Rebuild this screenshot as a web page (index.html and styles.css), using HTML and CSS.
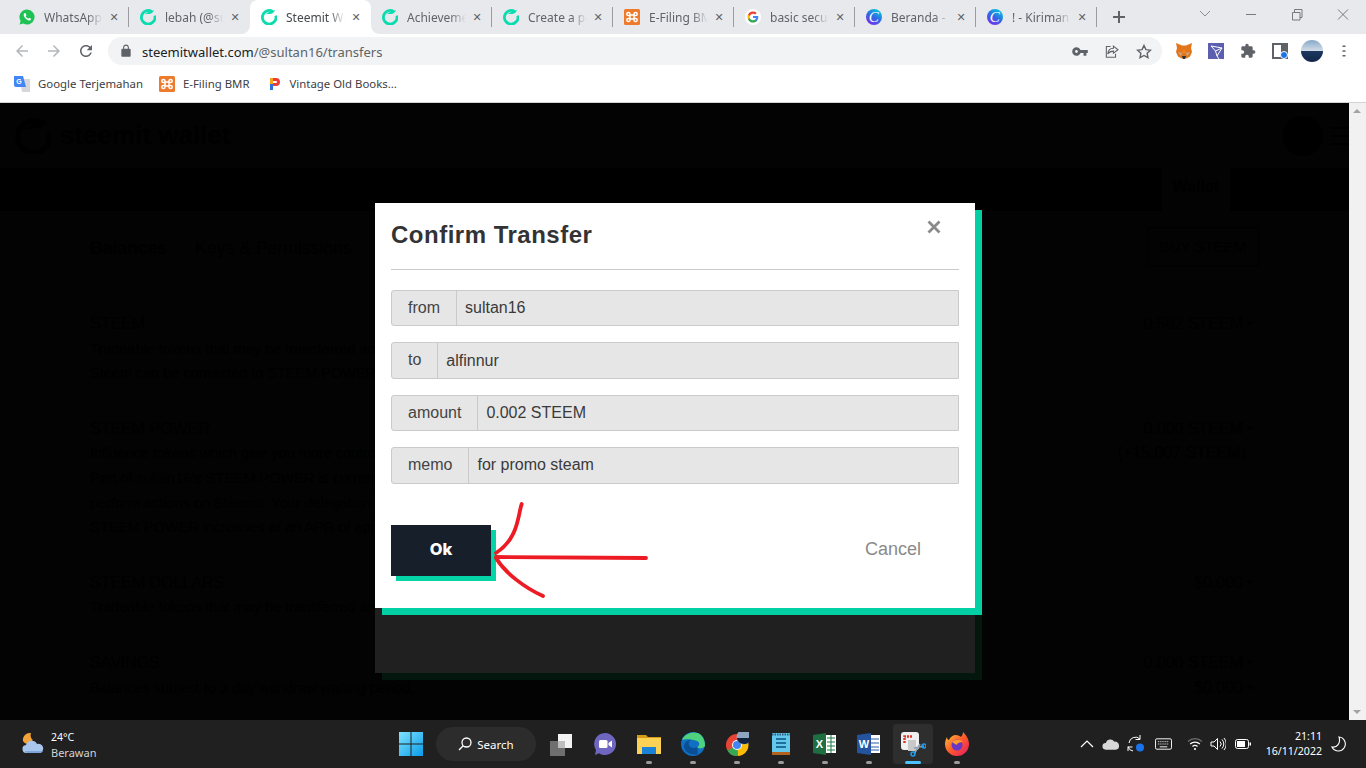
FILE: index.html
```html
<!DOCTYPE html>
<html lang="en">
<head>
    <meta charset="UTF-8">
    <meta name="viewport" content="width=device-width, initial-scale=1.0">
    <title>Steemit Wallet - Confirm Transfer</title>
    <link rel="stylesheet" href="styles.css">
</head>
<body>
    <!-- shared favicons -->
    <svg class="sprites" width="0" height="0">
        <defs>
            <symbol id="ico-steem" viewBox="0 0 16 16">
                <path d="M11.600 2.400A6.800 6.800 0 1 0 14.800 6.600" fill="none" stroke="#0bdcb0" stroke-width="2.800"/>
                <path d="M4.600 5.400C6.400 3 10 2.200 14 0.900 13 3.800 11 5.200 8.400 5 6.900 4.900 5.600 5 4.600 5.400Z" fill="#0bdcb0"/>
            </symbol>
            <symbol id="ico-xampp" viewBox="0 0 16 16">
                <rect width="16" height="16" rx="1.500" fill="#ee7a2c"/>
                <path d="M6 6H10V10H6ZM6 6V5A1.600 1.600 0 1 0 4.400 6.600H6M10 6V5A1.600 1.600 0 1 1 11.600 6.600H10M6 10V11A1.600 1.600 0 1 1 4.400 9.400H6M10 10V11A1.600 1.600 0 1 0 11.600 9.400H10" fill="none" stroke="#fff" stroke-width="1.500"/>
            </symbol>
            <symbol id="ico-google" viewBox="0 0 16 16">
                <circle cx="8" cy="8" r="8" fill="#fff"/>
                <path d="M13.300 8.100c0-.4 0-.8-.1-1.100H8v2.100h3a2.600 2.600 0 0 1-1.100 1.700v1.400h1.800c1-1 1.600-2.400 1.600-4.100Z" fill="#4285f4"/>
                <path d="M8 13.500c1.500 0 2.700-.5 3.700-1.300l-1.800-1.400c-.5.300-1.100.5-1.900.5-1.400 0-2.700-1-3.100-2.300H3v1.400A5.500 5.500 0 0 0 8 13.500Z" fill="#34a853"/>
                <path d="M4.900 9A3.300 3.300 0 0 1 4.900 7V5.600H3a5.500 5.500 0 0 0 0 4.800Z" fill="#fbbc05"/>
                <path d="M8 4.700c.8 0 1.500.3 2.100.8l1.600-1.600A5.500 5.500 0 0 0 3 5.600L4.900 7C5.300 5.700 6.600 4.700 8 4.700Z" fill="#ea4335"/>
            </symbol>
            <symbol id="ico-canva" viewBox="0 0 16 16">
                <defs>
                    <linearGradient id="canva-grad" x1="0.200" y1="1" x2="0.800" y2="0">
                        <stop offset="0" stop-color="#7d2ae8"/>
                        <stop offset="0.500" stop-color="#2f6ae6"/>
                        <stop offset="1" stop-color="#00d0d8"/>
                    </linearGradient>
                </defs>
                <circle cx="8" cy="8" r="8" fill="url(#canva-grad)"/>
                <text x="7.800" y="12.800" text-anchor="middle" class="canva-c">C</text>
            </symbol>
        </defs>
    </svg>

    <div class="tabstrip">
        <div class="tab">
            <svg class="favicon" viewBox="0 0 16 16">
                <path d="M8 .5a7.500 7.500 0 0 0-6.400 11.400L.6 15.500l3.700-1A7.500 7.500 0 1 0 8 .5Z" fill="#1fc254"/>
                <path d="M5.600 4.200c-.6.400-1.100 1.200-.9 2.300.4 2 2.900 4.600 5 5 1 .2 1.900-.4 2.200-1 .2-.4.100-.7-.2-.9l-1.300-.7c-.3-.1-.5 0-.7.200l-.5.600c-1-.4-2-1.400-2.500-2.400l.5-.6c.2-.2.200-.4.100-.7L6.700 4.500c-.2-.4-.7-.5-1.100-.3Z" fill="#fff"/>
            </svg>
            <span class="tab-title">WhatsApp</span>
            <span class="tab-close">&#10005;</span>
        </div>
        <div class="tab tab-before-active">
            <svg class="favicon"><use href="#ico-steem"/></svg>
            <span class="tab-title">lebah (@su</span>
            <span class="tab-close">&#10005;</span>
        </div>
        <div class="tab tab-active">
            <svg class="favicon"><use href="#ico-steem"/></svg>
            <span class="tab-title">Steemit Wa</span>
            <span class="tab-close">&#10005;</span>
        </div>
        <div class="tab">
            <svg class="favicon"><use href="#ico-steem"/></svg>
            <span class="tab-title">Achieveme</span>
            <span class="tab-close">&#10005;</span>
        </div>
        <div class="tab">
            <svg class="favicon"><use href="#ico-steem"/></svg>
            <span class="tab-title">Create a po</span>
            <span class="tab-close">&#10005;</span>
        </div>
        <div class="tab">
            <svg class="favicon"><use href="#ico-xampp"/></svg>
            <span class="tab-title">E-Filing BM</span>
            <span class="tab-close">&#10005;</span>
        </div>
        <div class="tab">
            <svg class="favicon"><use href="#ico-google"/></svg>
            <span class="tab-title">basic secur</span>
            <span class="tab-close">&#10005;</span>
        </div>
        <div class="tab">
            <svg class="favicon"><use href="#ico-canva"/></svg>
            <span class="tab-title">Beranda - C</span>
            <span class="tab-close">&#10005;</span>
        </div>
        <div class="tab">
            <svg class="favicon"><use href="#ico-canva"/></svg>
            <span class="tab-title">! - Kiriman</span>
            <span class="tab-close">&#10005;</span>
        </div>
        <svg class="new-tab" viewBox="0 0 28 14">
            <path d="M14 1v12M8 7h12" stroke="#5f6368" stroke-width="2"/>
        </svg>
        <div class="window-controls">
            <svg viewBox="0 0 46 28"><path d="M18 11l5 5 5-5" fill="none" stroke="#8a8c90"/></svg>
            <svg viewBox="0 0 46 28"><path d="M18 14.500h10" stroke="#77797d"/></svg>
            <svg viewBox="0 0 46 28"><path d="M18.500 12.500h7.500v7.500h-7.500zM20.500 12v-2.500h7.500v8h-2" fill="none" stroke="#77797d"/></svg>
            <svg viewBox="0 0 46 28"><path d="M18 9.500l10 10M28 9.500l-10 10" stroke="#77797d"/></svg>
        </div>
    </div>

    <div class="toolbar">
        <svg class="nav-btn" viewBox="0 0 24 24"><path d="M20 11H7.830l5.590-5.590L12 4l-8 8 8 8 1.410-1.410L7.830 13H20v-2z" fill="#b4b6b9"/></svg>
        <svg class="nav-btn" viewBox="0 0 24 24"><path d="M4 11h12.170l-5.590-5.590L12 4l8 8-8 8-1.410-1.410L16.170 13H4v-2z" fill="#b4b6b9"/></svg>
        <svg class="nav-btn" viewBox="0 0 24 24"><path d="M17.650 6.350C16.200 4.900 14.210 4 12 4c-4.420 0-7.990 3.580-7.990 8s3.570 8 7.990 8c3.730 0 6.840-2.550 7.730-6h-2.080c-.82 2.330-3.040 4-5.650 4-3.310 0-6-2.690-6-6s2.690-6 6-6c1.660 0 3.140.69 4.220 1.780L13 11h7V4l-2.350 2.350z" fill="#5f6368"/></svg>
        <div class="omnibox">
            <svg class="lock" viewBox="0 0 24 24"><path d="M18 8h-1V6c0-2.760-2.240-5-5-5S7 3.240 7 6v2H6c-1.100 0-2 .9-2 2v10c0 1.100.9 2 2 2h12c1.100 0 2-.9 2-2V10c0-1.100-.9-2-2-2zM15.100 8H8.900V6c0-1.710 1.390-3.100 3.100-3.100 1.710 0 3.100 1.390 3.100 3.100v2z" fill="#5f6368"/></svg>
            <div class="url"><span class="url-host">steemitwallet.com</span>/@sultan16/transfers</div>
            <svg class="omni-btn" viewBox="0 0 24 24"><path d="M12.650 10C11.830 7.670 9.610 6 7 6c-3.310 0-6 2.690-6 6s2.690 6 6 6c2.610 0 4.830-1.670 5.650-4H17v4h4v-4h2v-4H12.650zM7 14c-1.100 0-2-.9-2-2s.9-2 2-2 2 .9 2 2-.9 2-2 2z" fill="#5f6368"/></svg>
            <svg class="omni-btn" viewBox="0 0 24 24"><path d="M10 5H4v15h13v-5M14 4.500l6.500 5-6.500 5v-3c-3.500 0-6 1-8 4 .5-4.500 3-8 8-8v-3Z" fill="none" stroke="#5f6368" stroke-width="1.500"/></svg>
            <svg class="omni-btn" viewBox="0 0 24 24"><path d="M12 3.500l2.700 5.800 6.300.8-4.600 4.300 1.200 6.300-5.600-3.100-5.600 3.100 1.200-6.300L3 10.100l6.300-.8z" fill="none" stroke="#5f6368" stroke-width="2"/></svg>
        </div>
        <div class="ext">
            <svg width="16" height="16" viewBox="0 0 16 16">
                <path d="M0 0l6 2.500h4L16 0l-1 5 1 4-2 4.500-3.500 2h-5L2 13.500 0 9l1-4z" fill="#e2761b"/>
                <path d="M2 9l4 1-1 3zM14 9l-4 1 1 3z" fill="#c0ad9e"/>
                <path d="M6 13h4l-1 3H7z" fill="#233447"/>
                <path d="M8 6l-2 4h4z" fill="#f6851b"/>
            </svg>
        </div>
        <div class="ext">
            <svg width="16" height="16" viewBox="0 0 16 16">
                <rect width="16" height="16" fill="#5c5fb0"/>
                <path d="M3 3l11 2-5 8-1.500-5zM7.500 8L14 5M9 13l2 3" fill="none" stroke="#fff"/>
            </svg>
        </div>
        <div class="ext">
            <svg width="16" height="16" viewBox="0 0 24 24"><path d="M20.500 11H19V7c0-1.100-.9-2-2-2h-4V3.500C13 2.120 11.880 1 10.500 1S8 2.120 8 3.500V5H4c-1.100 0-1.990.9-1.990 2v3.800H3.500c1.490 0 2.700 1.210 2.700 2.700s-1.210 2.700-2.700 2.700H2V20c0 1.100.9 2 2 2h3.800v-1.500c0-1.490 1.210-2.700 2.700-2.700 1.490 0 2.700 1.210 2.700 2.700V22H17c1.100 0 2-.9 2-2v-4h1.500c1.380 0 2.500-1.120 2.500-2.500S21.880 11 20.500 11z" fill="#5f6368"/></svg>
        </div>
        <div class="ext">
            <svg width="16" height="16" viewBox="0 0 16 16">
                <path d="M1 1h14v14H1z" fill="none" stroke="#5f6368" stroke-width="2"/>
                <rect x="9" y="1" width="6" height="14" fill="#5f6368"/>
                <circle cx="12" cy="12" r="3.500" fill="#1a73e8" stroke="#fff"/>
            </svg>
        </div>
        <div class="ext">
            <div class="profile"></div>
        </div>
        <div class="ext">
            <svg width="16" height="16" viewBox="0 0 16 16"><path d="M8 2.500v1.500M8 7.300v1.500M8 12v1.500" stroke="#5f6368" stroke-width="3"/></svg>
        </div>
    </div>

    <div class="bookmarks">
        <div class="bookmark">
            <svg class="favicon" viewBox="0 0 16 16">
                <path d="M6 3h10v13H8z" fill="#d5d7da"/>
                <path d="M0 0h9l3 11H2a2 2 0 0 1-2-2z" fill="#4285f4"/>
                <text x="5" y="8" text-anchor="middle" class="translate-g">G</text>
            </svg>
            Google Terjemahan
        </div>
        <div class="bookmark">
            <svg class="favicon"><use href="#ico-xampp"/></svg>
            E-Filing BMR
        </div>
        <div class="bookmark">
            <svg class="favicon" viewBox="0 0 16 16">
                <path d="M5 2h5a4 4 0 0 1 0 8H7v-3h3a1 1 0 0 0 0-2H5z" fill="#ef3b36"/>
                <path d="M4 2h3v12H4z" fill="#f9a51a"/>
                <path d="M4 8h3v6H4z" fill="#2d72d9"/>
            </svg>
            Vintage Old Books...
        </div>
    </div>

    <div class="page">
        <div class="content">
            <header class="site-header">
                <svg class="site-logo" viewBox="0 0 36 36">
                    <path d="M27 5A16 16 0 1 0 34 14" fill="none" stroke="#000" stroke-width="5"/>
                    <path d="M10 12C14 7 22 5 32 2 30 9 24 11 18 10Z" fill="#000"/>
                </svg>
                <div class="site-name">steemit wallet</div>
                <div class="site-avatar"></div>
                <div class="hamburger"><span></span><span></span><span></span></div>
            </header>
            <nav class="site-nav">
                <a class="nav-link">Blog</a>
                <a class="nav-link">Rewards</a>
                <a class="nav-link nav-link-active">Wallet</a>
            </nav>
            <main class="wallet">
                <div class="wallet-tabs">
                    <div class="wallet-tab wallet-tab-active">Balances</div>
                    <div class="wallet-tab">Keys &amp; Permissions</div>
                    <div class="buy-btn">BUY STEEM</div>
                </div>
                <section class="balance balance-first">
                    <div>
                        <div class="balance-name">STEEM</div>
                        <div class="balance-desc">Tradeable tokens that may be transferred anywhere at anytime.<br>Steem can be converted to STEEM POWER in a process called powering up.</div>
                    </div>
                    <div class="balance-value"><span class="caret">0.502 STEEM</span></div>
                </section>
                <section class="balance">
                    <div>
                        <div class="balance-name">STEEM POWER</div>
                        <div class="balance-desc">Influence tokens which give you more control over post payouts and allow you to earn on curation rewards.<br>Part of sultan16's STEEM POWER is currently delegated. Delegation is donated for influence or to help new users<br>perform actions on Steemit. Your delegation amount can fluctuate.<br>STEEM POWER increases at an APR of approximately 2.90%, subject to blockchain variance.</div>
                    </div>
                    <div class="balance-value"><span class="caret">0.000 STEEM</span><div class="delegated">(+15.007 STEEM)</div></div>
                </section>
                <section class="balance">
                    <div>
                        <div class="balance-name">STEEM DOLLARS</div>
                        <div class="balance-desc">Tradeable tokens that may be transferred anywhere at anytime.</div>
                    </div>
                    <div class="balance-value"><span class="caret">$0.000</span></div>
                </section>
                <section class="balance">
                    <div>
                        <div class="balance-name">SAVINGS</div>
                        <div class="balance-desc">Balances subject to 3 day withdraw waiting period.</div>
                    </div>
                    <div class="balance-value"><span class="caret">0.000 STEEM</span><br><span class="caret">$0.000</span></div>
                </section>
            </main>
        </div>
        <div class="scrollbar">
            <span class="scroll-up"></span>
            <span class="scroll-down"></span>
        </div>

        <div class="modal-wrap">
            <div class="modal">
                <h2 class="modal-title">Confirm Transfer</h2>
                <svg class="modal-close" viewBox="0 0 14 14"><path d="M1.500 1.500l11 11M12.500 1.500l-11 11" stroke="#8a8a8a" stroke-width="2.800"/></svg>
                <hr class="modal-line">
                <div class="field"><span class="field-label">from</span><span class="field-value">sultan16</span></div>
                <div class="field"><span class="field-label">to</span><span class="field-value">alfinnur</span></div>
                <div class="field"><span class="field-label">amount</span><span class="field-value">0.002 STEEM</span></div>
                <div class="field"><span class="field-label">memo</span><span class="field-value">for promo steam</span></div>
                <div class="modal-actions">
                    <button class="ok-btn">Ok</button>
                    <span class="cancel">Cancel</span>
                </div>
                <!-- hand drawn arrow pointing at Ok -->
                <svg class="red-arrow" viewBox="0 0 170 105">
                    <path d="M36.700 6C33 16 34 40 11 55M11 59L161 60M11 60C20 75 40 90 58 98" fill="none" stroke="#ed1c24" stroke-width="3.800" stroke-linecap="round"/>
                </svg>
            </div>
            <div class="modal-rest"></div>
        </div>
    </div>

    <div class="taskbar">
        <div class="weather">
            <svg class="weather-icon" viewBox="0 0 26 24">
                <path d="M11 1a7 7 0 0 0-8 8c1 2 3 3 5 3l5-4c-2-1-3-4-2-7Z" fill="#f2a33a"/>
                <path d="M7 21a4 4 0 0 1-1-8 6 6 0 0 1 11-1 4.500 4.500 0 0 1 3 9Z" fill="#a9c6ec"/>
                <path d="M7 21a3 3 0 0 1-2-2h18a4 4 0 0 1-3 2Z" fill="#7ea4dc"/>
            </svg>
            <div class="weather-text">
                <div class="weather-temp">24°C</div>
                <div class="weather-desc">Berawan</div>
            </div>
        </div>
        <div class="task-icons">
            <div class="task task-start">
                <svg width="24" height="24" viewBox="0 0 24 24">
                    <defs>
                        <linearGradient id="win-grad" x1="0" y1="0" x2="1" y2="1">
                            <stop offset="0" stop-color="#7fe3ff"/>
                            <stop offset="1" stop-color="#0a9be8"/>
                        </linearGradient>
                    </defs>
                    <path d="M0 0h11.500v11.500H0zM12.500 0H24v11.500H12.500zM0 12.500h11.500V24H0zM12.500 12.500H24V24H12.500z" fill="url(#win-grad)"/>
                </svg>
            </div>
            <div class="search-pill">
                <svg width="14" height="14" viewBox="0 0 14 14"><circle cx="8.500" cy="5.500" r="4.500" fill="none" stroke="#fff" stroke-width="1.300"/><path d="M5.200 8.800L1 13" stroke="#fff" stroke-width="1.300"/></svg>
                Search
            </div>
            <div class="task">
                <svg width="24" height="24" viewBox="0 0 24 24">
                    <rect x="1" y="9" width="15" height="15" fill="#6f6f6f"/>
                    <rect x="9" y="2" width="14" height="14" fill="#f2f2f2"/>
                    <rect x="9" y="9" width="7" height="7" fill="#bdbdbd"/>
                </svg>
            </div>
            <div class="task">
                <svg width="24" height="24" viewBox="0 0 24 24">
                    <path d="M12 1a11 11 0 1 1-6 20.200L2 23l1-5A11 11 0 0 1 12 1Z" fill="#6f66c0"/>
                    <rect x="6" y="8" width="8.500" height="8" rx="1.500" fill="#fff"/>
                    <path d="M15.500 11l3.500-2.500v7L15.500 13z" fill="#fff"/>
                </svg>
            </div>
            <div class="task task-open">
                <svg width="24" height="24" viewBox="0 0 24 24">
                    <path d="M0 3h9l2 2h13v4H0z" fill="#d59c17"/>
                    <path d="M0 6h24v16H0z" fill="#fcd256"/>
                    <rect x="5" y="15" width="14" height="7" fill="#1a83d6"/>
                </svg>
            </div>
            <div class="task task-open">
                <svg width="24" height="24" viewBox="0 0 24 24">
                    <circle cx="12" cy="12" r="12" fill="#0f6fc4"/>
                    <path d="M1 8C4 1 14-2 20 3c3 3 4 7 4 11-2 3-6 3-8 1 3-1 3-5 0-6-5-2-12-2-15-1Z" fill="#4fd27d"/>
                    <path d="M16 15c-3 2-7 1-8-2-1-2 0-4 2-5-4 0-7 3-7 7 1 5 7 9 14 7z" fill="#0a4e93"/>
                </svg>
            </div>
            <div class="task task-open">
                <svg width="24" height="24" viewBox="0 0 24 24">
                    <circle cx="12" cy="13" r="11" fill="#e94335"/>
                    <path d="M12 13L2.500 18.500A11 11 0 0 0 13 24z" fill="#34a853"/>
                    <path d="M12 7.500h10A11 11 0 0 1 13 24z" fill="#fbbc05"/>
                    <circle cx="12" cy="13" r="5" fill="#fff"/>
                    <circle cx="12" cy="13" r="4" fill="#4285f4"/>
                    <circle cx="19" cy="5" r="7.500" fill="#8fa6bf"/>
                    <path d="M12 6h14c0 3-3 6-7 6s-7-3-7-6Z" fill="#12243d"/>
                </svg>
            </div>
            <div class="task task-open">
                <svg width="24" height="24" viewBox="0 0 24 24">
                    <rect x="3" y="1" width="18" height="22" fill="#64c8ea"/>
                    <rect x="3" y="20" width="18" height="3" fill="#b4621f"/>
                    <path d="M7 7h10M7 11h10M7 15h10" stroke="#1d6f9e" stroke-width="2"/>
                    <path d="M3 2.500h18" stroke="#2d5d82" stroke-width="2" stroke-dasharray="1.500 1"/>
                </svg>
            </div>
            <div class="task task-open">
                <svg width="24" height="24" viewBox="0 0 24 24">
                    <path d="M12 3h11v18H12z" fill="#fff"/>
                    <path d="M14 6h8M14 10h8M14 14h8M14 18h8M18 3v18" stroke="#1d7a45"/>
                    <path d="M0 3l13-2v22L0 21z" fill="#1d6f42"/>
                    <text x="6.500" y="16" text-anchor="middle" class="office-letter">X</text>
                </svg>
            </div>
            <div class="task task-open">
                <svg width="24" height="24" viewBox="0 0 24 24">
                    <path d="M12 3h11v18H12z" fill="#fff"/>
                    <path d="M14 7h8M14 11h8M14 15h8M14 18h8" stroke="#2b5da8"/>
                    <path d="M0 3l14-2v22L0 21z" fill="#24549f"/>
                    <text x="7" y="16" text-anchor="middle" class="office-letter">W</text>
                </svg>
            </div>
            <div class="task task-active">
                <svg width="26" height="26" viewBox="0 0 26 26">
                    <rect x="1" y="1" width="18" height="18" rx="3" fill="#f0f0f0"/>
                    <path d="M4.500 12V5.500H12" fill="none" stroke="#d83b2d" stroke-width="2.500" stroke-dasharray="2 1"/>
                    <path d="M8 9h8v11H8z" fill="#c9c9c9"/>
                    <path d="M14 23L20 13M24 15L14 17" stroke="#8fa0ad" stroke-width="1.500"/>
                    <circle cx="13" cy="23" r="2" fill="none" stroke="#1f9cf0" stroke-width="1.500"/>
                    <circle cx="24" cy="15" r="2" fill="none" stroke="#1f9cf0" stroke-width="1.500"/>
                </svg>
            </div>
            <div class="task task-open">
                <svg width="24" height="24" viewBox="0 0 24 24">
                    <defs>
                        <linearGradient id="fox-grad" x1="0" y1="0" x2="1" y2="1">
                            <stop offset="0" stop-color="#ffcd3a"/>
                            <stop offset="0.500" stop-color="#ff5a2a"/>
                            <stop offset="1" stop-color="#e3176a"/>
                        </linearGradient>
                    </defs>
                    <path d="M18 0c3 3 6 7 6 12a12 12 0 1 1-24 0c0-3 1-5 2-7 0 2 1 3 2 3 1-3 4-5 7-5 2 0 4 1 5 2 1-1 2-3 2-5Z" fill="url(#fox-grad)"/>
                    <circle cx="12" cy="13" r="5.500" fill="#6a37c4"/>
                    <path d="M7 10c3-3 8-3 11 0-3 0-6 1-6 3-2-1-4-2-5-3Z" fill="#ff9a2a"/>
                </svg>
            </div>
        </div>
        <div class="tray">
            <svg class="tray-chevron" viewBox="0 0 14 14"><path d="M1 10l6-6 6 6" fill="none" stroke="#fff" stroke-width="1.200"/></svg>
            <svg class="tray-cloud" viewBox="0 0 18 14"><path d="M4 13a3.500 3.500 0 0 1 0-7 5 5 0 0 1 9-1.500A4.500 4.500 0 0 1 18 9.500 3.500 3.500 0 0 1 14.500 13Z" fill="#d8d8d8"/></svg>
            <svg class="tray-sync" viewBox="0 0 18 18">
                <path d="M2 8a6.500 6.500 0 0 1 11-4M13 0v4.500H8.500M6 16A6 6 0 0 1 1 11.500M1 16v-4h4.500" fill="none" stroke="#fff"/>
                <circle cx="13" cy="12.500" r="4" fill="#1a73e8"/>
            </svg>
            <svg class="tray-keyboard" viewBox="0 0 18 12">
                <rect x=".5" y=".5" width="17" height="11" rx="1.500" fill="none" stroke="#fff"/>
                <path d="M3 3.500h12M3 6h12" stroke="#fff" stroke-dasharray="1 1"/>
                <path d="M5 9h8" stroke="#fff"/>
            </svg>
            <svg class="tray-wifi" viewBox="0 0 16 14">
                <path d="M1 4.500a10 10 0 0 1 14 0" fill="none" stroke="#6d6d6d" stroke-width="1.200"/>
                <path d="M3.200 7a7 7 0 0 1 9.600 0M5.500 9.500a3.600 3.600 0 0 1 5 0" fill="none" stroke="#fff" stroke-width="1.200"/>
                <circle cx="8" cy="12" r="1.100" fill="#fff"/>
            </svg>
            <svg class="tray-volume" viewBox="0 0 16 14">
                <path d="M1 5h3l3.500-3.500v11L4 9H1z" fill="none" stroke="#fff"/>
                <path d="M10 4.500a3.500 3.500 0 0 1 0 5M12 2.500a6.500 6.500 0 0 1 0 9M14 1a9 9 0 0 1 0 12" fill="none" stroke="#fff"/>
            </svg>
            <svg class="tray-battery" viewBox="0 0 16 10">
                <rect x=".5" y=".5" width="13" height="9" rx="2" fill="none" stroke="#fff"/>
                <rect x="2" y="2" width="8" height="6" fill="#fff"/>
                <rect x="14.500" y="3.500" width="1.500" height="3" fill="#fff"/>
            </svg>
            <div class="clock">
                <div>21:11</div>
                <div>16/11/2022</div>
            </div>
            <svg class="tray-moon" viewBox="0 0 16 16"><path d="M8 1a7 7 0 1 1-7 10C6 12 10 7 8 1Z" fill="none" stroke="#fff" stroke-width="1.100"/></svg>
        </div>
    </div>
</body>
</html>
```

FILE: styles.css
```css
/* Basic reset */
* {
    margin: 0;
    padding: 0;
    box-sizing: border-box;
}

html, body {
    height: 100%;
    overflow: hidden;
}

body {
    background: #fff;
    font-family: "Noto Sans", "Open Sans", sans-serif;
    width: 1366px;
    height: 768px;
}

.sprites {
    position: absolute;
}

.canva-c {
    font-family: "Liberation Serif", serif;
    font-style: italic;
    font-size: 15px;
    fill: #fff;
}

.translate-g {
    font-family: "Liberation Sans", sans-serif;
    font-weight: bold;
    font-size: 7px;
    fill: #fff;
}

.office-letter {
    font-family: "Liberation Sans", sans-serif;
    font-weight: bold;
    font-size: 11px;
    fill: #fff;
}

/* Browser tabs */
.tabstrip {
    display: flex;
    height: 34px;
    padding-left: 8px;
    background: #e8e9ed;
}

.tab {
    position: relative;
    display: flex;
    align-items: center;
    width: 121px;
    height: 34px;
    padding-left: 11px;
    font-size: 12px;
    color: #5f6368;
}

.tab::after {
    content: '';
    position: absolute;
    right: 0;
    top: 7px;
    width: 1px;
    height: 20px;
    background: #9a9ca0;
}

.tab-before-active::after {
    display: none;
}

.tab-active {
    background: #fff;
    color: #45484c;
    border-radius: 8px 8px 0 0;
}

/* little curves at the foot of the active tab */
.tab-active::before,
.tab-active::after {
    content: '';
    position: absolute;
    top: auto;
    bottom: 0;
    width: 8px;
    height: 8px;
}

.tab-active::before {
    left: -8px;
    background: radial-gradient(circle at 0 0, transparent 7.500px, #fff 8px);
}

.tab-active::after {
    right: -8px;
    background: radial-gradient(circle at 100% 0, transparent 7.500px, #fff 8px);
}

.favicon {
    flex: none;
    width: 16px;
    height: 16px;
}

.tab-title {
    width: 60px;
    margin-left: 9px;
    white-space: nowrap;
    overflow: hidden;
    -webkit-mask-image: linear-gradient(to right, #000 72%, transparent 98%);
    mask-image: linear-gradient(to right, #000 72%, transparent 98%);
}

.tab-close {
    margin-left: 3px;
    width: 14px;
    text-align: center;
    font-size: 11px;
    font-weight: bold;
    color: #5f6368;
    font-family: "DejaVu Sans", sans-serif;
}

.new-tab {
    width: 28px;
    height: 14px;
    margin: 10px 0 0 8px;
}

.window-controls {
    display: flex;
    margin-left: auto;
}

.window-controls svg {
    width: 46px;
    height: 28px;
}

/* Address bar */
.toolbar {
    display: flex;
    align-items: center;
    height: 34px;
    padding-left: 6px;
    background: #fff;
}

.nav-btn {
    width: 32px;
    height: 18px;
}

.omnibox {
    display: flex;
    align-items: center;
    width: 1054px;
    height: 28px;
    margin: 0 6px;
    padding: 0 2px 0 10px;
    background: #f1f3f4;
    border-radius: 14px;
}

.lock {
    width: 16px;
    height: 14px;
    flex: none;
}

.url {
    flex: 1;
    margin-left: 8px;
    padding-top: 1px;
    font-size: 13px;
    color: #5f6368;
}

.url-host {
    color: #202124;
}

.omni-btn {
    width: 32px;
    height: 17px;
}

.ext {
    display: flex;
    align-items: center;
    justify-content: center;
    width: 32px;
    height: 34px;
}

.profile {
    width: 22px;
    height: 22px;
    border-radius: 50%;
    background: linear-gradient(#87a8c9 0%, #cfdbe6 48%, #1c3760 52%, #122648 100%);
}

/* Bookmarks bar */
.bookmarks {
    display: flex;
    align-items: center;
    height: 35px;
    padding: 0 0 3px 14px;
    gap: 16px;
    background: #fff;
    border-bottom: 1px solid #d2d3d5;
    font-size: 11.400px;
    color: #3c4043;
}

.bookmark {
    display: flex;
    align-items: center;
    gap: 8px;
    white-space: nowrap;
}

/* Dimmed wallet page */
.page {
    position: relative;
    display: flex;
    height: 617px;
    overflow: hidden;
    background: #030303;
    font-family: "Liberation Sans", Arial, sans-serif;
    color: #000;
}

.content {
    width: 1349px;
}

.scrollbar {
    position: relative;
    width: 17px;
    background: #f1f1f1;
}

.scroll-up,
.scroll-down {
    position: absolute;
    left: 4px;
    border-left: 4px solid transparent;
    border-right: 4px solid transparent;
}

.scroll-up {
    top: 6px;
    border-bottom: 4px solid #a3a3a3;
}

.scroll-down {
    bottom: 6px;
    border-top: 4px solid #a3a3a3;
}

.site-header {
    display: flex;
    align-items: center;
    height: 65px;
    padding: 0 0 0 15px;
}

.site-logo {
    width: 36px;
    height: 36px;
}

.site-name {
    margin-left: 9px;
    font-size: 26px;
    font-weight: bold;
}

.site-avatar {
    width: 40px;
    height: 40px;
    margin-left: auto;
    border-radius: 50%;
    background: #000;
}

.hamburger {
    width: 18px;
    margin-left: 8px;
    display: flex;
    flex-direction: column;
    gap: 6px;
}

.hamburger span {
    height: 2px;
    background: #000;
}

.site-nav {
    display: flex;
    align-items: stretch;
    height: 43px;
    padding-left: 118px;
    background: #000;
    font-size: 16px;
    line-height: 38px;
}

.nav-link {
    padding: 0 11.500px;
}

.nav-link-active {
    width: 68px;
    padding: 0;
    margin-left: auto;
    margin-right: 119px;
    background: #030303;
    font-weight: bold;
    text-align: center;
}

.wallet {
    padding: 16px 90px 0;
}

.wallet-tabs {
    display: flex;
    align-items: center;
    height: 40px;
    font-size: 17.600px;
}

.wallet-tab {
    margin: 2px 28px 0 0;
}

.wallet-tab-active {
    font-weight: bold;
}

.buy-btn {
    width: 112px;
    height: 40px;
    margin-left: auto;
    border: 1px solid #000;
    border-radius: 3px;
    text-align: center;
    line-height: 38px;
    font-size: 15px;
}

.balance {
    display: flex;
    justify-content: space-between;
    margin-top: 31px;
    font-size: 14.500px;
    line-height: 24.600px;
}

.balance-first {
    margin-top: 45px;
}

.balance-name {
    font-size: 16px;
}

.balance-value {
    padding-right: 5px;
    text-align: right;
    font-size: 16px;
}

.caret {
    position: relative;
    margin-right: 11px;
}

.caret::after {
    content: '';
    position: absolute;
    right: -11px;
    top: 6px;
    border-left: 4px solid transparent;
    border-right: 4px solid transparent;
    border-top: 5px solid #000;
}

.delegated {
    margin-right: 8px;
}

/* Confirm dialog */
.modal-wrap {
    position: absolute;
    left: 375px;
    top: 100px;
    width: 600px;
}

.modal {
    position: relative;
    z-index: 1;
    height: 405px;
    padding: 0 16px;
    background: #fff;
    box-shadow: 7px 7px 0 #03cfa5;
    color: #333;
}

.modal-rest {
    height: 65px;
    background: #202020;
    box-shadow: 7px 7px 0 #03170f;
}

.modal-title {
    height: 66px;
    padding-top: 17px;
    font-size: 24px;
    line-height: 30px;
    font-weight: bold;
    letter-spacing: 0.500px;
}

.modal-close {
    position: absolute;
    top: 17px;
    right: 34px;
    width: 14px;
    height: 14px;
}

.modal-line {
    height: 1px;
    margin-bottom: 20px;
    border: 0;
    background: #cacaca;
}

.field {
    display: flex;
    align-items: center;
    height: 36.400px;
    margin-bottom: 16px;
    background: #e6e6e6;
    border: 1px solid #cacaca;
    border-radius: 3px 0 0 3px;
    font-size: 16px;
}

.field-label {
    padding: 0 16px;
    height: 100%;
    line-height: 34.600px;
    border-right: 1px solid #cacaca;
    color: #444;
}

.field-value {
    padding-left: 8px;
    color: #3a3a3a;
}

.modal-actions {
    display: flex;
    align-items: center;
    justify-content: space-between;
    margin-top: 41.400px;
    padding-right: 38px;
}

.ok-btn {
    width: 100px;
    height: 51px;
    padding-bottom: 3px;
    background: #17202a;
    color: #fff;
    border: none;
    box-shadow: 5px 5px 0 #05d3a8;
    font-family: Inter, "Open Sans", sans-serif;
    font-weight: 800;
    font-size: 16.500px;
}

.cancel {
    margin-bottom: 1px;
    font-size: 18px;
    color: #8a8a8a;
}

.red-arrow {
    position: absolute;
    left: 110px;
    top: 295px;
    width: 170px;
    height: 105px;
}

/* Windows taskbar */
.taskbar {
    display: flex;
    align-items: center;
    height: 48px;
    background: #202020;
    color: #fff;
    font-size: 11px;
    font-family: "Noto Sans", "Open Sans", sans-serif;
}

.weather {
    display: flex;
    align-items: center;
    width: 389px;
    padding-left: 20px;
}

.weather-icon {
    width: 26px;
    height: 24px;
}

.weather-text {
    margin: 2px 0 0 5px;
    line-height: 16px;
}

.weather-temp {
    font-size: 10.500px;
}

.weather-desc {
    color: #d4d4d4;
}

.task-icons {
    display: flex;
    align-items: center;
}

.task {
    position: relative;
    display: flex;
    align-items: center;
    justify-content: center;
    width: 44px;
    height: 40px;
    border-radius: 4px;
}

.task-start {
    margin-right: 3px;
}

.search-pill {
    display: flex;
    align-items: center;
    justify-content: center;
    gap: 5px;
    width: 100px;
    height: 34px;
    margin-right: 3px;
    border-radius: 17px;
    background: #2c2c2c;
    font-size: 11.500px;
}

.task-open::after,
.task-active::after {
    content: '';
    position: absolute;
    bottom: 0;
    left: 19px;
    width: 6px;
    height: 3px;
    border-radius: 2px;
    background: #9a9a9a;
}

.task-active {
    width: 40px;
    margin: 0 2px;
    background: #2e2e2e;
}

.task-active::after {
    left: 12px;
    width: 16px;
    background: #4cc2ff;
}

.tray {
    display: flex;
    align-items: center;
    margin-left: auto;
    padding-right: 19px;
    height: 48px;
}

.tray svg {
    flex: none;
}

.tray-chevron {
    width: 14px;
    height: 14px;
}

.tray-cloud {
    width: 17px;
    height: 14px;
    margin-left: 8px;
}

.tray-sync {
    width: 18px;
    height: 18px;
    margin-left: 8px;
}

.tray-keyboard {
    width: 17px;
    height: 12px;
    margin-left: 10px;
}

.tray-wifi {
    width: 16px;
    height: 14px;
    margin-left: 15px;
}

.tray-volume {
    width: 16px;
    height: 14px;
    margin-left: 7px;
}

.tray-battery {
    width: 16px;
    height: 10px;
    margin-left: 9px;
}

.clock {
    width: 71px;
    text-align: right;
    line-height: 15px;
    font-size: 10.600px;
}

.tray-moon {
    width: 16px;
    height: 16px;
    margin-left: 9px;
}
```
